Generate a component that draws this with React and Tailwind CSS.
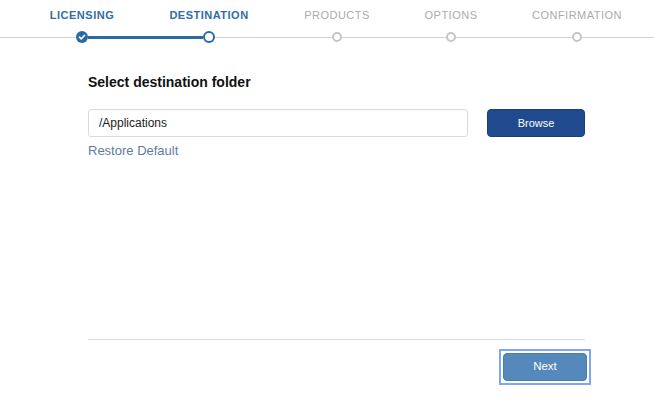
import React, { useState } from 'react';

const STEPS = [
  { label: 'Licensing', state: 'done', ml: 'ml-[32px]' },
  { label: 'Destination', state: 'current', ml: 'ml-[27px]' },
  { label: 'Products', state: 'todo', ml: 'ml-[28px]' },
  { label: 'Options', state: 'todo', ml: 'ml-[14px]' },
  { label: 'Confirmation', state: 'todo', ml: 'ml-[26px]' },
];

function Check() {
  return (
    <svg viewBox="0 0 12 12" className="w-[12px] h-[12px]">
      <circle cx="6" cy="6" r="6" fill="#2a6aa2" />
      <path d="M3.4 6.2 L5.2 7.9 L8.6 4.3" fill="none" stroke="#fff" strokeWidth="1.6" strokeLinecap="round" strokeLinejoin="round" />
    </svg>
  );
}

function Stepper() {
  return (
    <div>
      <div className="flex pt-[8px]">
        {STEPS.map(s => (
          <div
            key={s.label}
            className={`${s.ml} w-[100px] text-center text-[11px] leading-[14px] uppercase tracking-[0.5px] whitespace-nowrap ${s.state === 'todo' ? 'text-[#ababab]' : 'text-[#2f6ea6] font-bold'}`}
          >
            {s.label}
          </div>
        ))}
      </div>
      <div className="flex items-center h-[12px] mt-[9px]">
        <div className="w-[76px] h-px bg-[#d2d2d2]" />
        <Check />
        <div className="w-[115px] h-[3px] bg-[#2a6aa2]" />
        <div className="w-[12px] h-[12px] rounded-full border-[2.5px] border-[#2a6aa2] bg-white" />
        <div className="w-[117px] h-px bg-[#d2d2d2]" />
        <div className="w-[10px] h-[10px] rounded-full border-2 border-[#c6c6c6] bg-white" />
        <div className="w-[104px] h-px bg-[#d2d2d2]" />
        <div className="w-[10px] h-[10px] rounded-full border-2 border-[#c6c6c6] bg-white" />
        <div className="w-[116px] h-px bg-[#d2d2d2]" />
        <div className="w-[10px] h-[10px] rounded-full border-2 border-[#c6c6c6] bg-white" />
        <div className="flex-1 h-px bg-[#d2d2d2]" />
      </div>
    </div>
  );
}

export default function App() {
  const [path, setPath] = useState('/Applications');

  return (
    <div className="h-[405px] w-[654px] bg-white flex flex-col font-['Liberation_Sans',Arial,sans-serif] text-[#1f1f1f]">
      <Stepper />

      <div className="flex-1 px-[88px] pr-[69px]">
        <h2 className="mt-[31px] text-[14px] leading-[16px] font-bold text-[#111]">Select destination folder</h2>
        <div className="flex gap-[19px] mt-[19px]">
          <input
            className="flex-1 h-[28px] px-[10px] text-[12px] text-[#222] border border-[#dadada] rounded-[3px] outline-none"
            value={path}
            onChange={e => setPath(e.target.value)}
          />
          <button className="w-[98px] h-[28px] rounded-[4px] bg-[#1f4b8e] border border-[#183f7a] text-white text-[11px]">Browse</button>
        </div>
        <button className="mt-[6px] text-[13px] leading-[16px] text-[#5d7ca6]" onClick={() => setPath('/Applications')}>Restore Default</button>
      </div>

      <div className="mx-[88px] mr-[69px] border-t border-[#dcdcdc] pt-[9px] pb-[20px] flex justify-end">
        <div className="border-2 border-[#7fa6f4] p-[2px] -mr-[6px]">
          <button className="block w-[84px] h-[28px] rounded-[4px] bg-[#5589bb] border border-[#4a7cad] text-white text-[11.5px]">Next</button>
        </div>
      </div>
    </div>
  );
}
